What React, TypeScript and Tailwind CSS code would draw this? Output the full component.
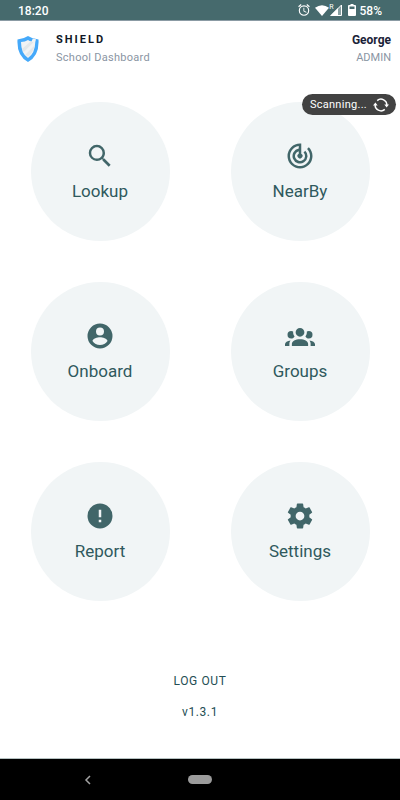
import React from 'react';

type IconProps = { d: string; className?: string };

function Icon({ d, className = 'size-[30px]' }: IconProps) {
  return (
    <svg viewBox="0 0 24 24" fill="currentColor" fillRule="evenodd" aria-hidden="true" className={className}>
      <path d={d} />
    </svg>
  );
}

const SEARCH =
  'M9.5 3A6.5 6.5 0 0 1 16 9.5c0 1.61-.59 3.09-1.56 4.23l.27.27h.79l5 5-1.5 1.5-5-5v-.79l-.27-.27A6.516 6.516 0 0 1 9.5 16a6.5 6.5 0 0 1 0-13m0 2C7 5 5 7 5 9.5S7 14 9.5 14 14 12 14 9.5 12 5 9.5 5z';
const RADAR =
  'M19.07 4.93l-1.41 1.41A8 8 0 1 1 11 4.07v2.02A6 6 0 1 0 16.24 7.76l-1.41 1.41A4 4 0 1 1 11 8.14v2.14A2 2 0 1 0 13 10.28V2h-1A10 10 0 1 0 22 12c0-2.76-1.12-5.26-2.93-7.07z';
const ACCOUNT =
  'M12 2a10 10 0 1 0 0 20 10 10 0 0 0 0-20zM12 5.1a3.2 3.2 0 1 1 0 6.4 3.2 3.2 0 0 1 0-6.4zM12 19.2c-2.5 0-4.71-1.28-6-3.2.03-2 4-3.1 6-3.1s5.97 1.1 6 3.1c-1.29 1.92-3.5 3.2-6 3.2z';
const GROUP =
  'M12 5.5A3.5 3.5 0 0 1 15.5 9 3.5 3.5 0 0 1 12 12.5 3.5 3.5 0 0 1 8.5 9 3.5 3.5 0 0 1 12 5.5M5 8c.56 0 1.08.15 1.53.42-.15 1.43.27 2.85 1.13 3.96C7.16 13.34 6.16 14 5 14a3 3 0 0 1-3-3 3 3 0 0 1 3-3m14 0a3 3 0 0 1 3 3 3 3 0 0 1-3 3c-1.16 0-2.16-.66-2.66-1.62.86-1.11 1.28-2.53 1.13-3.96C17.92 8.15 18.44 8 19 8M5.5 18.25c0-2.07 2.91-3.75 6.5-3.75s6.5 1.68 6.5 3.75V20h-13v-1.75M0 20v-1.5c0-1.39 1.89-2.56 4.45-2.9-.59.68-.95 1.62-.95 2.65V20H0m24 0h-3.5v-1.75c0-1.03-.36-1.97-.95-2.65 2.56.34 4.45 1.51 4.45 2.9V20z';
const ALERT = 'M12 2a10 10 0 1 0 0 20 10 10 0 0 0 0-20zM11 7h2v6h-2zM11 15h2v2h-2z';
const COG =
  'M12 15.5A3.5 3.5 0 0 1 8.5 12 3.5 3.5 0 0 1 12 8.5a3.5 3.5 0 0 1 3.5 3.5 3.5 3.5 0 0 1-3.5 3.5m7.43-2.53c.04-.32.07-.64.07-.97s-.03-.66-.07-1l2.11-1.63c.19-.15.24-.42.12-.64l-2-3.46c-.12-.22-.39-.31-.61-.22l-2.49 1c-.52-.39-1.06-.73-1.69-.98l-.37-2.65A.506.506 0 0 0 14 2h-4c-.25 0-.46.18-.5.42l-.37 2.65c-.63.25-1.17.59-1.69.98l-2.49-1c-.22-.09-.49 0-.61.22l-2 3.46c-.13.22-.07.49.12.64L4.57 11c-.04.34-.07.67-.07 1s.03.65.07.97l-2.11 1.66c-.19.15-.25.42-.12.64l2 3.46c.12.22.39.3.61.22l2.49-1.01c.52.4 1.06.74 1.69.99l.37 2.65c.04.24.25.42.5.42h4c.25 0 .46-.18.5-.42l.37-2.65c.63-.26 1.17-.59 1.69-.99l2.49 1.01c.22.08.49 0 .61-.22l2-3.46c.12-.22.07-.49-.12-.64z';
const ALARM =
  'M12 20a7 7 0 1 1 0-14 7 7 0 0 1 0 14m0-16a9 9 0 1 0 0 18 9 9 0 0 0 0-18m.5 4H11v6l4.75 2.85.75-1.23-4-2.37V8M7.88 3.39L6.6 1.86 2 5.71l1.29 1.53 4.59-3.85M22 5.72l-4.6-3.86-1.29 1.53 4.6 3.86L22 5.72z';

const tiles = [
  { label: 'Lookup', icon: SEARCH },
  { label: 'NearBy', icon: RADAR },
  { label: 'Onboard', icon: ACCOUNT },
  { label: 'Groups', icon: GROUP },
  { label: 'Report', icon: ALERT },
  { label: 'Settings', icon: COG },
];

function StatusBar() {
  return (
    <div className="flex h-[21px] items-center justify-between border-b border-[#8b9ba4] bg-[#466a6d] px-[18px] text-xs font-medium text-white">
      <span className="pt-0.5">18:20</span>
      <div className="flex items-center">
        <Icon d={ALARM} className="mr-1 size-3.5" />
        <svg viewBox="0 0 14 11" className="h-[11px] w-3.5" fill="currentColor" aria-hidden="true">
          <path d="M0 2.8Q7-2.4 14 2.8L7 11z" />
        </svg>
        <span className="flex h-3 items-start">
          <span className="text-[7px] leading-[6px] font-normal">R</span>
          <svg viewBox="0 0 12 12" className="-ml-1 size-3" aria-hidden="true">
            <path d="M11.5 1v10.5H1z" fill="currentColor" fillOpacity=".35" stroke="currentColor" />
            <path d="M8 4v8H0z" fill="currentColor" />
          </svg>
        </span>
        <svg viewBox="0 0 8 12" className="mr-1 ml-1.5 h-3 w-2" fill="currentColor" fillRule="evenodd" aria-hidden="true">
          <path d="M2.5 0h3v1H7q1 0 1 1v9q0 1-1 1H1q-1 0-1-1V2q0-1 1-1h1.5zM1.5 2.5v2.5h5V2.5z" />
        </svg>
        <span className="pt-0.5">58%</span>
      </div>
    </div>
  );
}

function ShieldLogo() {
  return (
    <svg viewBox="0 0 22 26" className="h-[26px] w-[22px]" aria-hidden="true">
      <path d="M11 0Q15.5 3 21.5 3.5Q22.5 20 11 26Q-.5 20 .5 3.5Q6.5 3 11 0z" fill="#45a9fa" />
      <path d="M11 4Q8 5.8 4 6Q4 17.500 11 22Q18 17.500 18.300 6L19 3.200L15.800 2.600L14.500 5.500Q12.500 5.100 11 4z" fill="#f1f3f4" />
      <path d="M5 13L13.500 5.600L16.500 6.300L6.800 16z" fill="#e3e7e9" />
      <path d="M8.500 18.500L17.500 9.500Q16.500 16 11 20.500z" fill="#e3e7e9" />
    </svg>
  );
}

export default function App() {
  return (
    <div className="flex min-h-screen flex-col bg-white font-['Roboto','Noto_Sans',sans-serif]">
      <StatusBar />

      <header className="relative flex h-[61px] items-start justify-between pt-[11px] pr-[9px] pl-[17px]">
        <div className="flex">
          <div className="pt-1">
            <ShieldLogo />
          </div>
          <div className="ml-[17px]">
            <h1 className="text-[11px] leading-4 font-bold tracking-[2px] text-[#111827]">SHIELD</h1>
            <p className="mt-0.5 text-[11px] leading-4 tracking-wide text-[#8a95a3]">School Dashboard</p>
          </div>
        </div>
        <div className="text-right">
          <p className="text-xs leading-4 font-bold text-[#1a2238]">George</p>
          <p className="mt-0.5 text-[11px] leading-4 text-[#8a95a3]">ADMIN</p>
        </div>
        <div
          role="status"
          className="absolute top-[73px] right-1 z-10 flex h-[21px] items-center gap-1.5 rounded-full bg-[#424242] px-2 pr-[7px] text-[11px] tracking-wide text-white"
        >
          <span className="pt-0.5">Scanning...</span>
          <svg viewBox="0 0 16 16" className="size-4" fill="none" stroke="currentColor" strokeWidth="1.5" aria-hidden="true">
            <path d="M4.2 3.6A5.8 5.8 0 0 1 13.8 8.5M11.8 12.4A5.8 5.8 0 0 1 2.2 7.5" />
            <path d="M11.3 7.5h4.7l-2.4 3zM0 8.5h4.7l-2.3-3z" fill="currentColor" stroke="none" />
          </svg>
        </div>
      </header>

      <nav className="mt-5 grid grid-cols-2 justify-items-center gap-y-[41px]" aria-label="Dashboard">
        {tiles.map((tile) => (
          <button
            key={tile.label}
            type="button"
            className="flex size-[139px] flex-col items-center justify-center gap-2 rounded-full bg-[#f1f5f6] pt-px text-[#416669]"
          >
            <Icon d={tile.icon} />
            <span className="text-[17px] leading-6 text-[#2f595d]">{tile.label}</span>
          </button>
        ))}
      </nav>

      <footer className="mt-[72px] flex flex-col items-center gap-[15px] text-xs leading-4 tracking-wider text-[#244e54]">
        <button type="button">LOG OUT</button>
        <span>v1.3.1</span>
      </footer>

      <div className="mt-auto grid h-[42px] grid-cols-[1fr_24px_1fr] items-center border-t border-[#b5c1c1] bg-black">
        <button type="button" aria-label="Back" className="mr-3 justify-self-center text-[#a3a3a3]">
          <svg viewBox="0 0 8 10" className="h-2.5 w-2" fill="none" stroke="currentColor" strokeWidth="1.5" aria-hidden="true">
            <path d="M6 1L2 5l4 4" />
          </svg>
        </button>
        <button type="button" aria-label="Home" className="h-[9px] rounded-full bg-[#9c9c9c]" />
      </div>
    </div>
  );
}
